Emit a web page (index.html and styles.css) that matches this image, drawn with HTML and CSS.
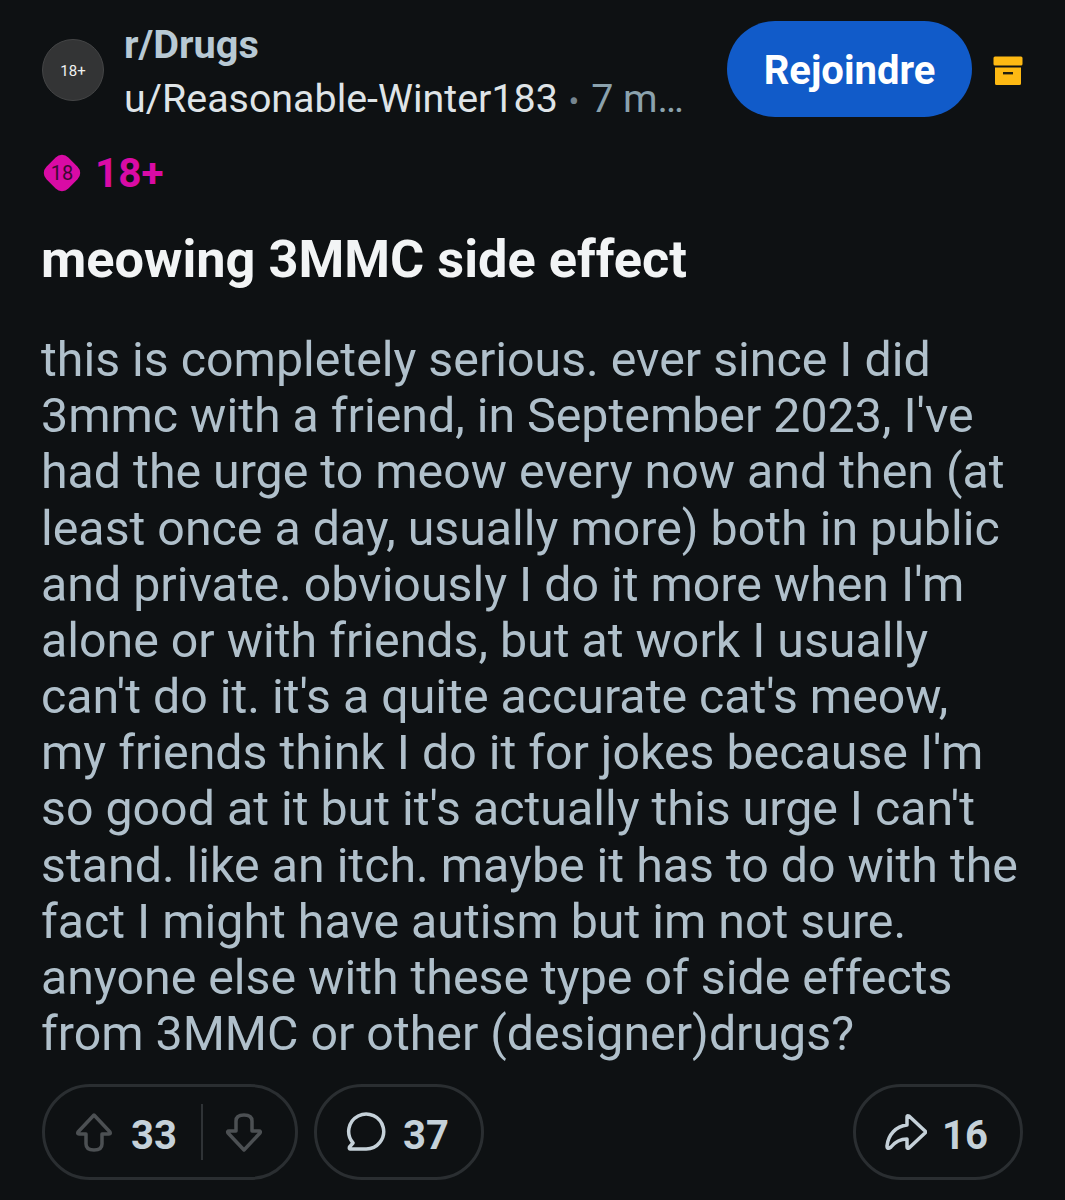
FILE: index.html
```html
<!DOCTYPE html>
<html lang="fr">
  <head>
    <meta charset="UTF-8" />
    <meta name="viewport" content="width=device-width, initial-scale=1.0" />
    <title>meowing 3MMC side effect</title>
    <link rel="stylesheet" href="styles.css">
  </head>
  <body>
    <div class="post">
      <div class="head">
        <div class="avatar">18+</div>
        <div class="meta">
          <div class="sub">r/Drugs</div>
          <div class="byline">u/Reasonable-Winter183 <span class="dot">•</span> <span class="age">7 m…</span></div>
        </div>
        <button class="join">Rejoindre</button>
        <svg class="archive" viewBox="0 0 30 30" width="30" height="30">
          <rect x="0.5" y="0.5" width="29" height="9" rx="1.5" fill="#fdb913"/>
          <path d="M2 11.500h26v16a1.500 1.500 0 0 1-1.500 1.500h-23a1.500 1.500 0 0 1-1.500-1.500z" fill="#fdb913"/>
          <rect x="10" y="16" width="10" height="2.400" fill="#23200f"/>
        </svg>
      </div>

      <div class="nsfw">
        <svg class="nsfw-icon" viewBox="0 0 40 40" width="40" height="40">
          <rect x="4.500" y="4.500" width="31" height="31" rx="9" fill="#d90ba5" transform="rotate(45 20 20)"/>
          <text x="20" y="27" class="nsfw-num">18</text>
        </svg>
        <span>18+</span>
      </div>

      <h1 class="title">meowing 3MMC side effect</h1>

      <p class="text">this is completely serious. ever since I did<br>3mmc with a friend, in September 2023, I've<br>had the urge to meow every now and then (at<br>least once a day, usually more) both in public<br>and private. obviously I do it more when I'm<br>alone or with friends, but at work I usually<br>can't do it. it's a quite accurate cat's meow,<br>my friends think I do it for jokes because I'm<br>so good at it but it's actually this urge I can't<br>stand. like an itch. maybe it has to do with the<br>fact I might have autism but im not sure.<br>anyone else with these type of side effects<br>from 3MMC or other (designer)drugs?</p>

      <div class="actions">
        <div class="pill votes">
          <svg class="ico" viewBox="0 0 38 40" width="38" height="40">
            <path d="M19 3 L35 20 Q36 22 34 22 H27 V32 Q27 38 19 38 Q11 38 11 32 V22 H4 Q2 22 3 20 Z" class="grey"/>
          </svg>
          <span class="num">33</span>
          <span class="sep"></span>
          <svg class="ico" viewBox="0 0 38 40" width="38" height="40">
            <path d="M19 38 L35 21 Q36 19 34 19 H27 V9 Q27 3 19 3 Q11 3 11 9 V19 H4 Q2 19 3 21 Z" class="grey"/>
          </svg>
        </div>
        <div class="pill comments">
          <svg class="ico" viewBox="0 0 40 40" width="40" height="40">
            <path d="M4 37 H20 A17.500 17.500 0 1 0 7 31 L3.500 35 Q3 37 4 37 Z" class="light"/>
          </svg>
          <span class="num">37</span>
        </div>
        <div class="pill share">
          <svg class="ico" viewBox="0 0 42 40" width="42" height="40">
            <path d="M24 4 L40 19 Q41 20 40 21 L24 36 Q22 37 22 35 L22 27 C14 27 10 30 6 35 Q2 38 2 34 C3 23 11 14 22 13 L22 5 Q22 3 24 4 Z" class="light"/>
          </svg>
          <span class="num">16</span>
        </div>
      </div>
    </div>
  </body>
</html>
```

FILE: styles.css
```css
* {
  margin: 0;
  padding: 0;
  box-sizing: border-box;
}
body {
  background-color: #0e1113;
  font-family: Roboto, "Noto Sans", sans-serif;
  width: 1065px;
  height: 1200px;
  overflow: hidden;
}
.post {
  padding: 21px 42px 0 42px;
}
.head {
  display: flex;
  align-items: flex-start;
}
.avatar {
  flex: none;
  width: 62px;
  height: 62px;
  margin-top: 18px;
  border-radius: 50%;
  background-color: #333435;
  border: 1px solid #444546;
  color: #f0f1f1;
  font-size: 15px;
  line-height: 62px;
  text-align: center;
}
.meta {
  flex: none;
  margin-left: 20px;
  margin-top: 2px;
  width: 603px;
}
.sub {
  color: #b8c9d4;
  font-size: 39.700px;
  font-weight: 700;
  line-height: 44px;
}
.byline {
  color: #dfe4e7;
  font-size: 39.400px;
  line-height: 64px;
  white-space: nowrap;
}
.dot {
  margin-left: 1px;
  color: #76858f;
  font-size: 32px;
}
.age {
  margin-left: 2px;
  color: #8ba2ad;
}
.join {
  flex: none;
  width: 245px;
  height: 96px;
  padding-top: 3px;
  border: none;
  border-radius: 48px;
  background-color: #115bc9;
  color: #fff;
  font-family: inherit;
  font-size: 40px;
  font-weight: 700;
}
.archive {
  flex: none;
  margin: 35px 0 0 21px;
}
.nsfw {
  display: flex;
  align-items: center;
  margin-top: 19px;
  height: 42px;
  color: #d90ba5;
  font-size: 40.500px;
  font-weight: 700;
}
.nsfw-icon {
  margin-right: 13px;
}
.nsfw-num {
  font-size: 20px;
  font-weight: 400;
  fill: #3a0a30;
  text-anchor: middle;
}
.title {
  margin-top: 35px;
  margin-left: -1px;
  color: #f2f4f5;
  font-size: 52.300px;
  font-weight: 700;
  line-height: 60px;
}
.text {
  margin-top: 43px;
  margin-left: -1px;
  color: #b0c0cb;
  font-size: 48.300px;
  line-height: 56.170px;
  white-space: nowrap;
}
.actions {
  display: flex;
  margin-top: 22px;
}
.pill {
  display: flex;
  align-items: center;
  height: 96px;
  border: 3px solid #2a2e31;
  border-radius: 48px;
}
.votes {
  width: 256px;
  padding-left: 30px;
}
.comments {
  width: 170px;
  margin-left: 16px;
  padding-left: 29px;
}
.share {
  width: 170px;
  margin-left: auto;
  padding-left: 29px;
}
.num {
  color: #c5d1d9;
  font-size: 40px;
  font-weight: 700;
  margin-left: 18px;
  padding-top: 6px;
}
.comments .num {
  margin-left: 17px;
}
.share .num {
  margin-left: 15px;
}
.sep {
  width: 2px;
  height: 56px;
  background-color: #2f3336;
  margin: 0 22px 0 24px;
}
.ico {
  flex: none;
}
.grey {
  fill: none;
  stroke: #4c5053;
  stroke-width: 3.500;
  stroke-linejoin: round;
}
.light {
  fill: none;
  stroke: #c5d1d9;
  stroke-width: 3.500;
  stroke-linejoin: round;
}
```
